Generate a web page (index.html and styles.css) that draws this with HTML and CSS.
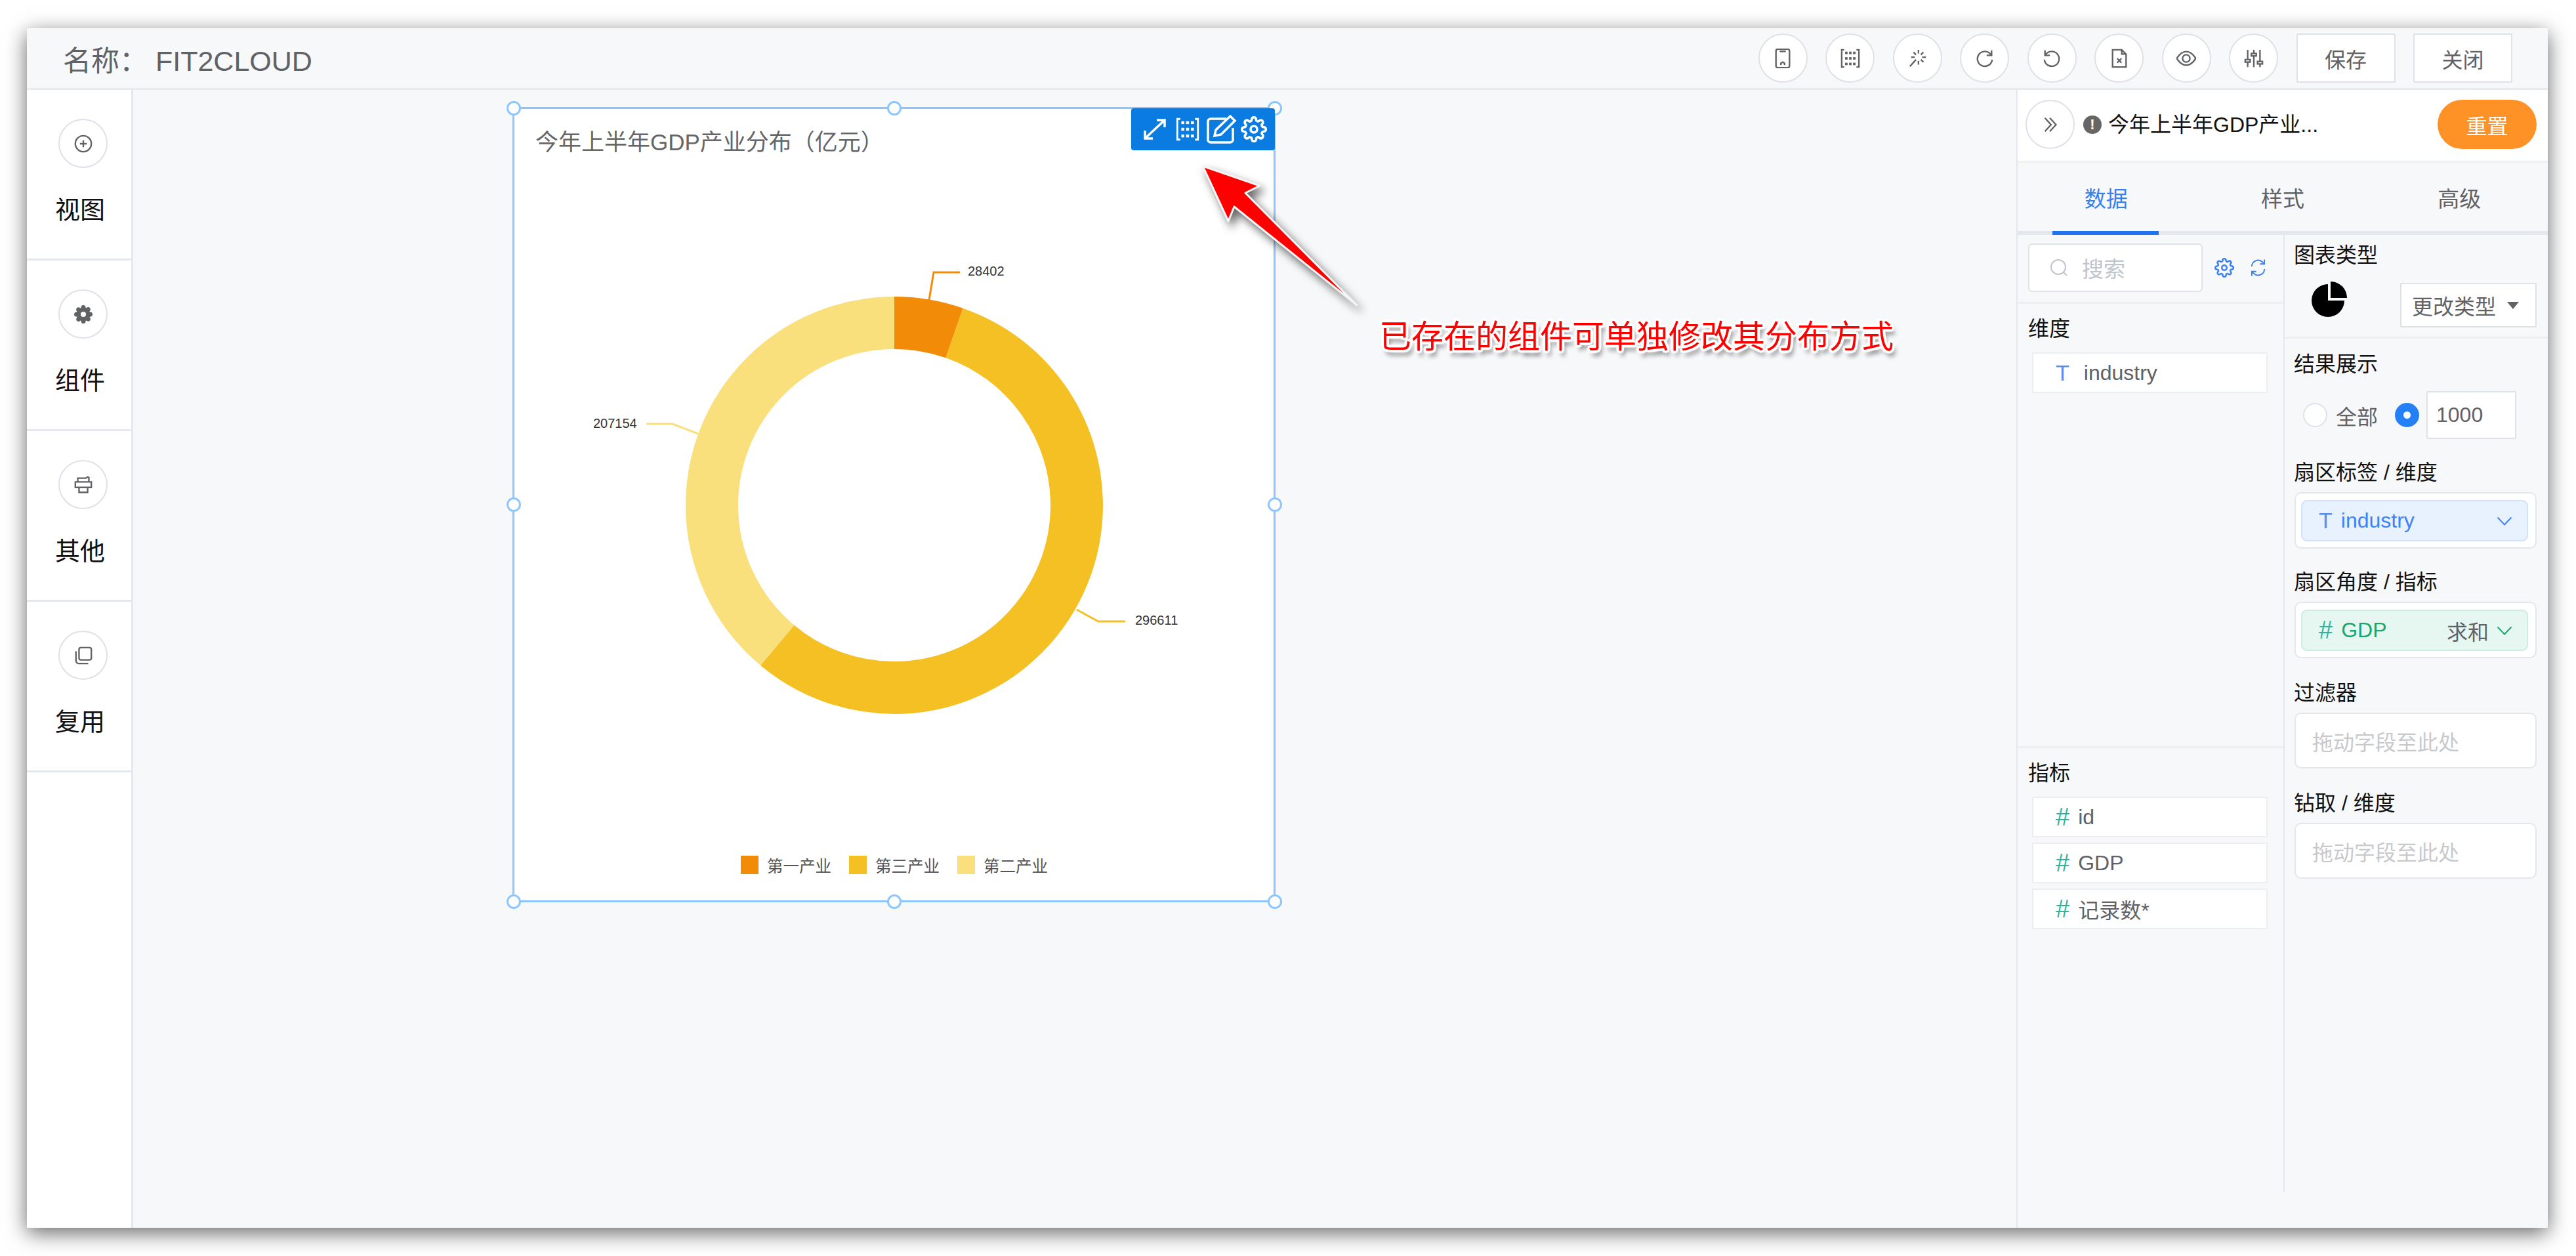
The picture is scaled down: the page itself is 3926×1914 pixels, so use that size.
FILE: index.html
```html
<!DOCTYPE html>
<html lang="zh">
<head>
  <meta charset="UTF-8" />
  <title>FIT2CLOUD</title>
  <link rel="stylesheet" href="styles.css">
</head>
<body>
  <svg class="sprite">
    <symbol id="gear" viewBox="0 0 24 24">
      <circle cx="12" cy="12" r="3"/>
      <path d="M19.4 15a1.65 1.65 0 0 0 .33 1.82l.06.06a2 2 0 0 1 0 2.83 2 2 0 0 1-2.83 0l-.06-.06a1.65 1.65 0 0 0-1.82-.33 1.65 1.65 0 0 0-1 1.51V21a2 2 0 0 1-2 2 2 2 0 0 1-2-2v-.09A1.65 1.65 0 0 0 9 19.4a1.65 1.65 0 0 0-1.82.33l-.06.06a2 2 0 0 1-2.83 0 2 2 0 0 1 0-2.83l.06-.06a1.65 1.65 0 0 0 .33-1.82 1.65 1.65 0 0 0-1.51-1H3a2 2 0 0 1-2-2 2 2 0 0 1 2-2h.09A1.65 1.65 0 0 0 4.6 9a1.65 1.65 0 0 0-.33-1.82l-.06-.06a2 2 0 0 1 0-2.83 2 2 0 0 1 2.83 0l.06.06a1.65 1.65 0 0 0 1.82.33H9a1.65 1.65 0 0 0 1-1.51V3a2 2 0 0 1 2-2 2 2 0 0 1 2 2v.09a1.65 1.65 0 0 0 1 1.51 1.65 1.65 0 0 0 1.82-.33l.06-.06a2 2 0 0 1 2.83 0 2 2 0 0 1 0 2.83l-.06.06a1.65 1.65 0 0 0-.33 1.82V9a1.65 1.65 0 0 0 1.51 1H21a2 2 0 0 1 2 2 2 2 0 0 1-2 2h-.09a1.65 1.65 0 0 0-1.51 1z"/>
    </symbol>
    <symbol id="split" viewBox="0 0 32 32">
      <path d="M6 2H2v28h4M26 2h4v28h-4"/>
      <g fill="currentColor" stroke="none">
        <rect x="7.500" y="5" width="4" height="4"/><rect x="14" y="5" width="4" height="4"/><rect x="20.500" y="5" width="4" height="4"/>
        <rect x="7.500" y="14" width="4" height="4"/><rect x="14" y="14" width="4" height="4"/><rect x="20.500" y="14" width="4" height="4"/>
        <rect x="7.500" y="23" width="4" height="4"/><rect x="14" y="23" width="4" height="4"/><rect x="20.500" y="23" width="4" height="4"/>
      </g>
    </symbol>
    <symbol id="chevron" viewBox="0 0 24 14">
      <path d="M1.5 1.5 12 12.5 22.5 1.5"/>
    </symbol>
  </svg>

  <div class="window">
    <header class="topbar">
      <div class="doc-name">名称： FIT2CLOUD</div>
      <div class="actions">
        <button class="round"><svg class="ico" viewBox="0 0 32 32"><rect x="5" y="1" width="22" height="30" rx="3"/><path d="M11 4.500h10M13 27v-3l3-2 3 2v3"/></svg></button>
        <button class="round"><svg class="ico"><use href="#split"/></svg></button>
        <button class="round"><svg class="ico" viewBox="0 0 32 32"><path d="M18 2v6M18 20v6M6 14h6M24 14h6M10 6l4 4M26 6l-4 4M26 22l-4-4M14 18 4 29"/></svg></button>
        <button class="round"><svg class="ico" viewBox="0 0 32 32"><path d="M26 10a12 12 0 1 0 2 8M27 3v8h-8"/></svg></button>
        <button class="round"><svg class="ico" viewBox="0 0 32 32"><path d="M6 10a12 12 0 1 1-2 8M5 3v8h8"/></svg></button>
        <button class="round"><svg class="ico" viewBox="0 0 32 32"><path d="M5 2h15l7 7v21H5zM20 2v7h7M12.500 16l7 7M19.500 16l-7 7"/></svg></button>
        <button class="round"><svg class="ico" viewBox="0 0 32 32"><path d="M0.500 16C5 9 10 5 16 5s11 4 15.500 11C27 23 22 27 16 27S5 23 .5 16z"/><circle cx="16" cy="16" r="6"/></svg></button>
        <button class="round"><svg class="ico" viewBox="0 0 32 32"><path d="M6 2v28M16 2v28M26 2v28"/><rect x="2" y="18" width="8" height="4" fill="#fff"/><rect x="12" y="8" width="8" height="4" fill="#fff"/><rect x="22" y="21" width="8" height="4" fill="#fff"/></svg></button>
        <button class="plain">保存</button>
        <button class="plain">关闭</button>
      </div>
    </header>

    <div class="workspace">
      <nav class="sidebar">
        <div class="side-item">
          <span class="round"><svg class="ico" viewBox="0 0 32 32"><circle cx="16" cy="16" r="13"/><path d="M16 10.500v11M10.500 16h11"/></svg></span>
          <span class="side-label">视图</span>
        </div>
        <div class="side-item">
          <span class="round"><svg class="ico ico-heavy" viewBox="0 0 24 24"><use href="#gear"/><circle class="gear-hole" cx="12" cy="12" r="3.500"/></svg></span>
          <span class="side-label">组件</span>
        </div>
        <div class="side-item">
          <span class="round"><svg class="ico" viewBox="0 0 32 32"><path d="M7 11V5h13l3-2 2 1v7M3 11h26v9h-6v8H9v-8H3zM9 20h14"/></svg></span>
          <span class="side-label">其他</span>
        </div>
        <div class="side-item">
          <span class="round"><svg class="ico" viewBox="0 0 32 32"><rect x="9" y="3" width="20" height="20" rx="3"/><path d="M4 9v15a5 5 0 0 0 5 5h15"/></svg></span>
          <span class="side-label">复用</span>
        </div>
      </nav>

      <main class="canvas">
        <section class="card">
          <i class="handle h-tl"></i><i class="handle h-tc"></i><i class="handle h-tr"></i>
          <i class="handle h-ml"></i><i class="handle h-mr"></i>
          <i class="handle h-bl"></i><i class="handle h-bc"></i><i class="handle h-br"></i>
          <div class="card-tools">
            <svg class="tool tool-expand" viewBox="0 0 34 32"><path d="M2 30 32 2M20 2h12v11M2 18v12h12"/></svg>
            <svg class="tool tool-split"><use href="#split"/></svg>
            <svg class="tool tool-edit" viewBox="0 0 46 44"><path d="M30 6H6a4 4 0 0 0-4 4v28a4 4 0 0 0 4 4h30a4 4 0 0 0 4-4V20"/><path d="M12 32l2-9L36 2l7 7-21 21z"/></svg>
            <svg class="tool tool-gear"><use href="#gear"/></svg>
          </div>
          <h3 class="card-title">今年上半年GDP产业分布（亿元）</h3>
          <svg class="donut" viewBox="784 246 1157 1042">
            <g class="ring" transform="rotate(-90 1363 770)">
              <circle cx="1363" cy="770" r="278" pathLength="532167" stroke="#fae07c" stroke-dasharray="207154 532167" stroke-dashoffset="-325013"/>
              <circle cx="1363" cy="770" r="278" pathLength="532167" stroke="#f5c023" stroke-dasharray="296611 532167" stroke-dashoffset="-28402"/>
              <circle cx="1363" cy="770" r="278" pathLength="532167" stroke="#f28b07" stroke-dasharray="28402 532167"/>
            </g>
            <polyline class="lead" stroke="#f28b07" points="1416,457 1423,415 1463,415"/>
            <polyline class="lead" stroke="#fae07c" points="1064,661 1025,646 985,646"/>
            <polyline class="lead" stroke="#f5c023" points="1641,929 1674,947 1715,947"/>
            <text class="val" x="1475" y="420">28402</text>
            <text class="val" x="904" y="652">207154</text>
            <text class="val" x="1730" y="952">296611</text>
          </svg>
          <div class="legend">
            <span class="swatch sw-1"></span><span class="legend-text">第一产业</span>
            <span class="swatch sw-3"></span><span class="legend-text">第三产业</span>
            <span class="swatch sw-2"></span><span class="legend-text">第二产业</span>
          </div>
        </section>
      </main>

      <aside class="panel">
        <div class="panel-head">
          <button class="round"><svg class="ico" viewBox="0 0 32 32"><path d="M7 5l10 11L7 27M15 5l10 11-10 11"/></svg></button>
          <span class="warn">!</span>
          <span class="panel-title">今年上半年GDP产业...</span>
          <button class="reset">重置</button>
        </div>
        <div class="tabs">
          <div class="tab tab-on">数据</div>
          <div class="tab">样式</div>
          <div class="tab">高级</div>
        </div>
        <div class="cols">
          <div class="col-fields">
            <div class="search-row">
              <div class="search">
                <svg class="search-ico" viewBox="0 0 28 28"><circle cx="13" cy="13" r="11"/><path d="M21 21l5 5"/></svg>
                <span>搜索</span>
              </div>
              <svg class="mini mini-gear"><use href="#gear"/></svg>
              <svg class="mini mini-sync" viewBox="0 0 26 30"><path d="M3 13a10 10 0 0 1 17-7l3 3M23 17a10 10 0 0 1-17 7l-3-3M23 2v7h-7M3 28v-7h7"/></svg>
            </div>
            <div class="group group-dim">
              <div class="group-label">维度</div>
              <div class="field-item"><span class="t-mark">T</span><span class="name-t">industry</span></div>
            </div>
            <div class="group group-qty">
              <div class="group-label">指标</div>
              <div class="field-item"><span class="hash">#</span><span class="name-h">id</span></div>
              <div class="field-item"><span class="hash">#</span><span class="name-h">GDP</span></div>
              <div class="field-item"><span class="hash">#</span><span class="name-h">记录数*</span></div>
            </div>
          </div>

          <div class="col-config">
            <div class="cfg-type">
              <div class="cfg-label">图表类型</div>
              <div class="type-row">
                <svg class="pie" viewBox="0 0 54 54"><path d="M25 4a25 25 0 1 0 25 25H25z"/><path d="M29 0a25 25 0 0 1 25 25H29z"/></svg>
                <div class="type-btn">更改类型<i class="caret"></i></div>
              </div>
            </div>
            <div class="cfg-rest">
              <div class="cfg-label">结果展示</div>
              <div class="radio-row">
                <i class="radio"></i><span class="radio-text">全部</span>
                <i class="radio radio-on"></i>
                <div class="num-input">1000</div>
              </div>
              <div class="field">
                <div class="cfg-label">扇区标签 / 维度</div>
                <div class="slot">
                  <div class="pill pill-blue"><span class="t-mark">T</span><span class="pill-name">industry</span><svg class="chev"><use href="#chevron"/></svg></div>
                </div>
              </div>
              <div class="field">
                <div class="cfg-label">扇区角度 / 指标</div>
                <div class="slot">
                  <div class="pill pill-green"><span class="hash">#</span><span class="pill-name">GDP</span><span class="pill-agg">求和</span><svg class="chev"><use href="#chevron"/></svg></div>
                </div>
              </div>
              <div class="field field-drop">
                <div class="cfg-label">过滤器</div>
                <div class="slot slot-empty">拖动字段至此处</div>
              </div>
              <div class="field field-drop">
                <div class="cfg-label">钻取 / 维度</div>
                <div class="slot slot-empty">拖动字段至此处</div>
              </div>
            </div>
          </div>
        </div>
      </aside>
    </div>
  </div>

  <svg class="note-arrow" viewBox="1810 235 280 250"><polygon points="1833,253 1920,283 1898,294 2068,465 1881,315 1872,337"/></svg>
  <div class="note-text">已存在的组件可单独修改其分布方式</div>
</body>
</html>
```

FILE: styles.css
```css
* {
  box-sizing: border-box;
}
body {
  margin: 0;
  position: relative;
  height: 1914px;
  overflow: hidden;
  background: #fff;
  font-family: "Liberation Sans", "Noto Sans CJK SC", sans-serif;
  font-size: 32px;
  color: #606266;
}
.sprite {
  display: none;
}
symbol {
  overflow: visible;
}
button {
  font-family: inherit;
  padding: 0;
  cursor: pointer;
}

/* window */
.window {
  margin: 43px 0 0 41px;
  width: 3842px;
  height: 1828px;
  background: #f7f8fa;
  box-shadow: 0 8px 30px rgba(0, 0, 0, 0.6);
  display: flex;
  flex-direction: column;
}
.topbar {
  height: 94px;
  flex: none;
  padding: 0 54px 0 55px;
  display: flex;
  align-items: center;
  justify-content: space-between;
  border-bottom: 3px solid #e9ebef;
}
.doc-name {
  /* TC centres the full-width colon in its cell, as the original does */
  font-family: "Liberation Sans", "Noto Sans CJK TC", sans-serif;
  font-size: 43px;
  color: #606266;
}
.actions {
  display: flex;
  gap: 27.500px;
}
.round {
  width: 75px;
  height: 75px;
  flex: none;
  border: 2px solid #dfe1e8;
  border-radius: 50%;
  background: #fff;
  display: flex;
  align-items: center;
  justify-content: center;
}
.ico {
  width: 30px;
  height: 30px;
  fill: none;
  stroke: #606266;
  stroke-width: 2.500;
  color: #606266;
}
.ico-heavy {
  width: 28px;
  height: 28px;
  fill: #606266;
  stroke: #606266;
  stroke-width: 2;
}
.gear-hole {
  fill: #fff;
  stroke: none;
}
.plain {
  width: 151px;
  height: 75px;
  border: 2px solid #dfe1e8;
  border-radius: 2px;
  background: #fff;
  font-size: 32px;
  color: #606266;
}

/* layout */
.workspace {
  flex: 1;
  display: flex;
  min-height: 0;
}
.sidebar {
  width: 162px;
  flex: none;
  background: #fff;
  border-right: 3px solid #e4e7ed;
}
.side-item {
  height: 260px;
  border-bottom: 3px solid #e4e7ed;
  padding: 44px 0 0 3px;
  display: flex;
  flex-direction: column;
  align-items: center;
}
.side-item .round {
  margin-left: 9px;
}
.side-label {
  margin-top: 39px;
  font-size: 38px;
  line-height: 50px;
  color: #111;
}
.canvas {
  flex: 1;
  min-width: 0;
}

/* chart card */
.card {
  position: relative;
  margin: 26px 0 0 578px;
  width: 1163px;
  height: 1212px;
  background: #fff;
  border: 3px solid #8cc5ff;
}
.handle {
  position: absolute;
  width: 22px;
  height: 22px;
  border: 3px solid #8cc5ff;
  border-radius: 50%;
  background: #fff;
  transform: translate(-50%, -50%);
}
.h-tl, .h-ml, .h-bl { left: -1.500px; }
.h-tc, .h-bc { left: 50%; }
.h-tr, .h-mr, .h-br { left: calc(100% + 1.500px); }
.h-tl, .h-tc, .h-tr { top: -1.500px; }
.h-ml, .h-mr { top: 50%; }
.h-bl, .h-bc, .h-br { top: calc(100% + 1.500px); }
.card-tools {
  position: absolute;
  top: -1px;
  right: -2px;
  width: 219px;
  height: 64px;
  background: #0a7be0;
  border-radius: 4px;
  display: flex;
  align-items: center;
  padding-left: 19px;
  color: #fff;
}
.tool {
  flex: none;
  fill: none;
  stroke: #fff;
  stroke-width: 3.500;
}
.tool-expand {
  width: 34px;
  height: 32px;
}
.tool-split {
  width: 40px;
  height: 36px;
  margin-left: 13px;
  stroke-width: 2.500;
}
.tool-edit {
  width: 46px;
  height: 44px;
  margin-left: 9px;
}
.tool-gear {
  width: 40px;
  height: 40px;
  margin-left: 6px;
  stroke-width: 2.200;
}
.card-title {
  margin: 0;
  padding: 22px 0 0 32px;
  font-size: 35px;
  font-weight: normal;
  line-height: 58px;
  color: #666;
}
.donut {
  display: block;
  width: 1157px;
  height: 1042px;
}
.ring circle {
  fill: none;
  stroke-width: 80;
}
.lead {
  fill: none;
  stroke-width: 3;
}
.val {
  font-size: 20px;
  fill: #333;
}
.legend {
  margin-top: 16px;
  height: 28px;
  padding-left: 345px;
  display: flex;
  align-items: center;
}
.swatch {
  width: 27px;
  height: 28px;
  flex: none;
}
.sw-1 { background: #f28b07; }
.sw-3 { background: #f5c023; }
.sw-2 { background: #fae07c; }
.legend-text {
  margin: 0 27px 0 13px;
  font-size: 24.500px;
  color: #555;
}

/* right panel */
.panel {
  width: 810px;
  flex: none;
  border-left: 2px solid #e4e7ed;
}
.panel-head {
  height: 111px;
  background: #fff;
  border-bottom: 3px solid #eef0f3;
  padding: 15px 17px 0 12px;
  display: flex;
  align-items: flex-start;
}
.warn {
  width: 28px;
  height: 28px;
  margin: 24px 10px 0 13px;
  border-radius: 50%;
  background: #666;
  color: #fff;
  font-size: 22px;
  font-weight: bold;
  line-height: 28px;
  text-align: center;
}
.panel-title {
  margin-top: 18px;
  line-height: 40px;
  color: #111;
}
.reset {
  margin-left: auto;
  width: 151px;
  height: 75px;
  border: 0;
  border-radius: 38px;
  background: #ff9227;
  color: #fff;
  font-size: 32px;
}
.tabs {
  height: 110px;
  flex: none;
  display: flex;
  border-bottom: 6px solid #e4e7ed;
}
.tab {
  flex: 1;
  position: relative;
  padding-top: 2px;
  display: flex;
  align-items: center;
  justify-content: center;
  font-size: 33px;
}
.tab-on {
  color: #3a7ff0;
}
.tab-on::after {
  content: "";
  position: absolute;
  left: 53px;
  bottom: -6px;
  width: 162px;
  height: 6px;
  background: #1f73ef;
}
.cols {
  height: 1458px;
  display: flex;
}
.col-fields {
  width: 405px;
  flex: none;
}
.col-config {
  flex: 1;
  border-left: 2px solid #e4e7ed;
}
.search-row {
  height: 105px;
  border-bottom: 3px solid #eceef2;
  padding: 13px 0 0 16px;
  display: flex;
  align-items: flex-start;
}
.search {
  width: 266px;
  height: 74px;
  border: 2px solid #dfe1e8;
  border-radius: 6px;
  background: #fff;
  padding-left: 31px;
  display: flex;
  align-items: center;
  color: #c0c4cc;
  font-size: 33px;
}
.search-ico {
  width: 28px;
  height: 28px;
  margin-right: 21px;
  fill: none;
  stroke: #c0c4cc;
  stroke-width: 2;
}
.mini {
  flex: none;
  fill: none;
  stroke: #3a7ff0;
  stroke-width: 2;
}
.mini-gear {
  width: 30px;
  height: 30px;
  margin: 22px 0 0 18px;
}
.mini-sync {
  width: 25px;
  height: 30px;
  margin: 22px 0 0 24px;
}
.group {
  padding: 18px 0 0 16px;
}
.group-dim {
  height: 677px;
  border-bottom: 3px solid #eceef2;
}
.group-label {
  margin-bottom: 16px;
  line-height: 40px;
  color: #111;
}
.field-item {
  width: 359px;
  height: 62px;
  margin: 0 0 8px 6px;
  padding-left: 34px;
  border: 2px solid #eceef2;
  background: #fff;
  display: flex;
  align-items: center;
}
.t-mark {
  font-size: 34px;
  color: #5b8def;
}
.hash {
  font-size: 38px;
  color: #2fb39b;
}
.name-t {
  margin-left: 22px;
}
.name-h {
  margin-left: 13px;
}
.cfg-type {
  height: 158px;
  padding: 11px 17px 0 14px;
  border-bottom: 3px solid #eceef2;
}
.cfg-rest {
  padding: 19px 17px 0 14px;
}
.cfg-label {
  line-height: 40px;
  color: #111;
}
.type-row {
  margin-top: 22px;
  display: flex;
  align-items: flex-start;
}
.pie {
  width: 54px;
  height: 54px;
  margin: -2px 0 0 27px;
}
.type-btn {
  margin-left: auto;
  width: 208px;
  height: 68px;
  border: 2px solid #dfe1e8;
  border-radius: 2px;
  background: #fff;
  padding-left: 16px;
  display: flex;
  align-items: center;
  white-space: nowrap;
}
.caret {
  margin-left: 17px;
  border: 9px solid transparent;
  border-top: 11px solid #606266;
  border-bottom: 0;
}
.radio-row {
  margin-top: 21px;
  padding-left: 14px;
  display: flex;
  align-items: center;
}
.radio {
  width: 37px;
  height: 37px;
  flex: none;
  border: 2px solid #dfe1e8;
  border-radius: 50%;
  background: #fff;
}
.radio-on {
  margin-left: 26px;
  border: 13px solid #2680f5;
}
.radio-text {
  margin-left: 13px;
}
.num-input {
  width: 137px;
  height: 73px;
  margin-left: 11px;
  padding-left: 13px;
  border: 2px solid #dfe1e8;
  border-radius: 2px;
  background: #fff;
  line-height: 69px;
}
.field {
  margin-top: 31px;
}
.field-drop {
  margin-top: 33px;
}
.field .cfg-label {
  margin-bottom: 10px;
}
.slot {
  width: 369px;
  height: 86px;
  margin-left: 1px;
  padding: 10px 11px 0 8px;
  border: 2px solid #e4e6ec;
  border-radius: 10px;
  background: #fff;
}
.slot-empty {
  height: 85px;
  padding: 0 0 0 25px;
  display: flex;
  align-items: center;
  color: #c8c9cc;
}
.pill {
  height: 63px;
  padding: 0 22px 0 25px;
  border: 2px solid;
  border-radius: 9px;
  display: flex;
  align-items: center;
}
.pill-blue {
  background: #e8f1fe;
  border-color: #cfe1fb;
  color: #3e82f7;
}
.pill-green {
  background: #e6f6f0;
  border-color: #c9eddf;
  color: #1aa76e;
}
.pill-name {
  margin-left: 13px;
}
.pill-agg {
  margin-left: auto;
  color: #606266;
}
.chev {
  width: 24px;
  height: 14px;
  margin-left: 12px;
  fill: none;
  stroke: currentColor;
  stroke-width: 2;
}
.pill-blue .chev {
  margin-left: auto;
}

/* annotation on top of the screenshot */
.note-arrow {
  position: absolute;
  left: 1810px;
  top: 235px;
  width: 280px;
  height: 250px;
  overflow: visible;
  filter: drop-shadow(6px 8px 7px rgba(0, 0, 0, 0.6));
}
.note-arrow polygon {
  fill: #f00;
  stroke: #f4f4f4;
  stroke-width: 3;
  stroke-linejoin: round;
}
.note-text {
  position: absolute;
  left: 2102px;
  top: 482px;
  font-size: 49px;
  line-height: 62px;
  white-space: nowrap;
  color: #f00;
  text-shadow: 4px 0 1px #fff, -4px 0 1px #fff, 0 4px 1px #fff, 0 -4px 1px #fff,
    3px 3px 1px #fff, -3px 3px 1px #fff, 3px -3px 1px #fff, -3px -3px 1px #fff,
    4px 8px 7px rgba(0, 0, 0, 0.6);
}
```
